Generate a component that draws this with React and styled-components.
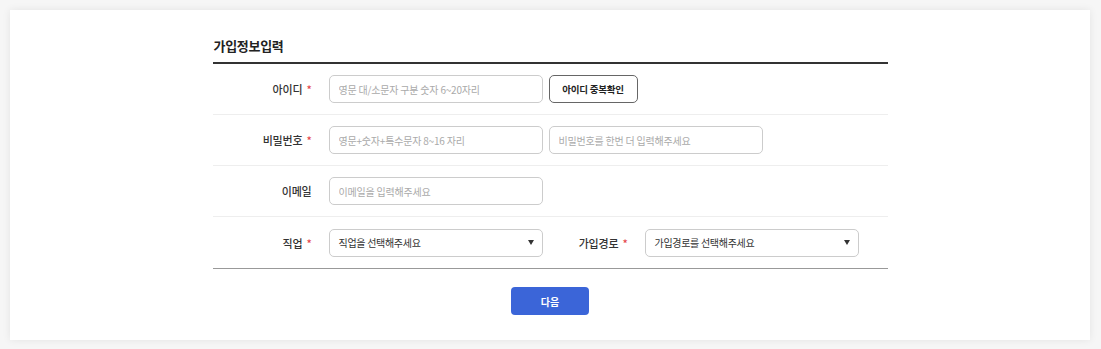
import React from "react";
import styled, { createGlobalStyle } from "styled-components";

const GlobalStyle = createGlobalStyle`
  html, body {
    margin: 0;
    padding: 0;
    background: #f6f6f6;
    font-family: "Noto Sans CJK KR", "Noto Sans", sans-serif;
  }
  * { box-sizing: border-box; }
`;

const Page = styled.div`
  padding: 10px 11px 9px 10px;
`;

const Card = styled.div`
  background: #fff;
  box-shadow: 0 0 8px rgba(0, 0, 0, 0.08);
  padding: 26px 0 25px;
  height: 330px;
`;

const Form = styled.div`
  width: 675px;
  margin: 0 auto;
`;

const Title = styled.h2`
  margin: 0;
  font-size: 13px;
  font-weight: 600;
  color: #222;
  letter-spacing: -0.3px;
  line-height: 20px;
  padding: 0 0 6px 1px;
  border-bottom: 2px solid #333;
`;

const Row = styled.div`
  display: flex;
  align-items: center;
  height: ${(p) => (p.last ? 52 : 51)}px;
  border-bottom: 1px solid ${(p) => (p.last ? "#999" : "#eee")};
`;

const Label = styled.label`
  width: ${(p) => p.width || 100}px;
  flex-shrink: 0;
  text-align: right;
  padding-right: 1px;
  margin-right: 16px;
  font-size: 11px;
  font-weight: 500;
  letter-spacing: -0.2px;
  color: #333;
`;

const Req = styled.span`
  color: #e5484d;
  margin-left: 4px;
`;

const Input = styled.input`
  width: 214px;
  height: 28px;
  border: 1px solid #ccc;
  border-radius: 5px;
  padding: 0 9px;
  font-family: inherit;
  font-size: 10px;
  letter-spacing: -0.2px;
  color: #333;
  outline: none;
  margin-right: ${(p) => p.gap || 0}px;
  &::placeholder {
    color: #aaa;
  }
`;

const Button = styled.button`
  width: 89px;
  height: 28px;
  border: 1px solid #666;
  border-radius: 5px;
  background: #fff;
  font-family: inherit;
  font-size: 9.5px;
  font-weight: 600;
  letter-spacing: -0.2px;
  color: #222;
  cursor: pointer;
`;

const Select = styled.div`
  width: 214px;
  height: 28px;
  border: 1px solid #ccc;
  border-radius: 5px;
  padding: 0 8px 0 9px;
  display: flex;
  align-items: center;
  justify-content: space-between;
  font-size: 10px;
  letter-spacing: -0.3px;
  color: #333;
`;

const Arrow = styled.span`
  width: 0;
  height: 0;
  border-left: 3px solid transparent;
  border-right: 3px solid transparent;
  border-top: 5px solid #333;
`;

const Footer = styled.div`
  display: flex;
  justify-content: center;
  padding-top: 18px;
`;

const NextButton = styled.button`
  width: 78px;
  height: 28px;
  border: none;
  border-radius: 4px;
  background: #3b65d8;
  color: #fff;
  font-family: inherit;
  font-size: 10px;
  font-weight: 600;
  cursor: pointer;
`;

export default function App() {
  return (
    <Page>
      <GlobalStyle />
      <Card>
        <Form>
          <Title>가입정보입력</Title>
          <Row>
            <Label>
              아이디<Req>*</Req>
            </Label>
            <Input gap={6} placeholder="영문 대/소문자 구분 숫자 6~20자리" />
            <Button>아이디 중복확인</Button>
          </Row>
          <Row>
            <Label>
              비밀번호<Req>*</Req>
            </Label>
            <Input gap={6} type="password" placeholder="영문+숫자+특수문자 8~16 자리" />
            <Input type="password" placeholder="비밀번호를 한번 더 입력해주세요" />
          </Row>
          <Row>
            <Label>이메일</Label>
            <Input placeholder="이메일을 입력해주세요" />
          </Row>
          <Row last>
            <Label>
              직업<Req>*</Req>
            </Label>
            <Select>
              직업을 선택해주세요
              <Arrow />
            </Select>
            <Label width={86}>
              가입경로<Req>*</Req>
            </Label>
            <Select>
              가입경로를 선택해주세요
              <Arrow />
            </Select>
          </Row>
          <Footer>
            <NextButton>다음</NextButton>
          </Footer>
        </Form>
      </Card>
    </Page>
  );
}
